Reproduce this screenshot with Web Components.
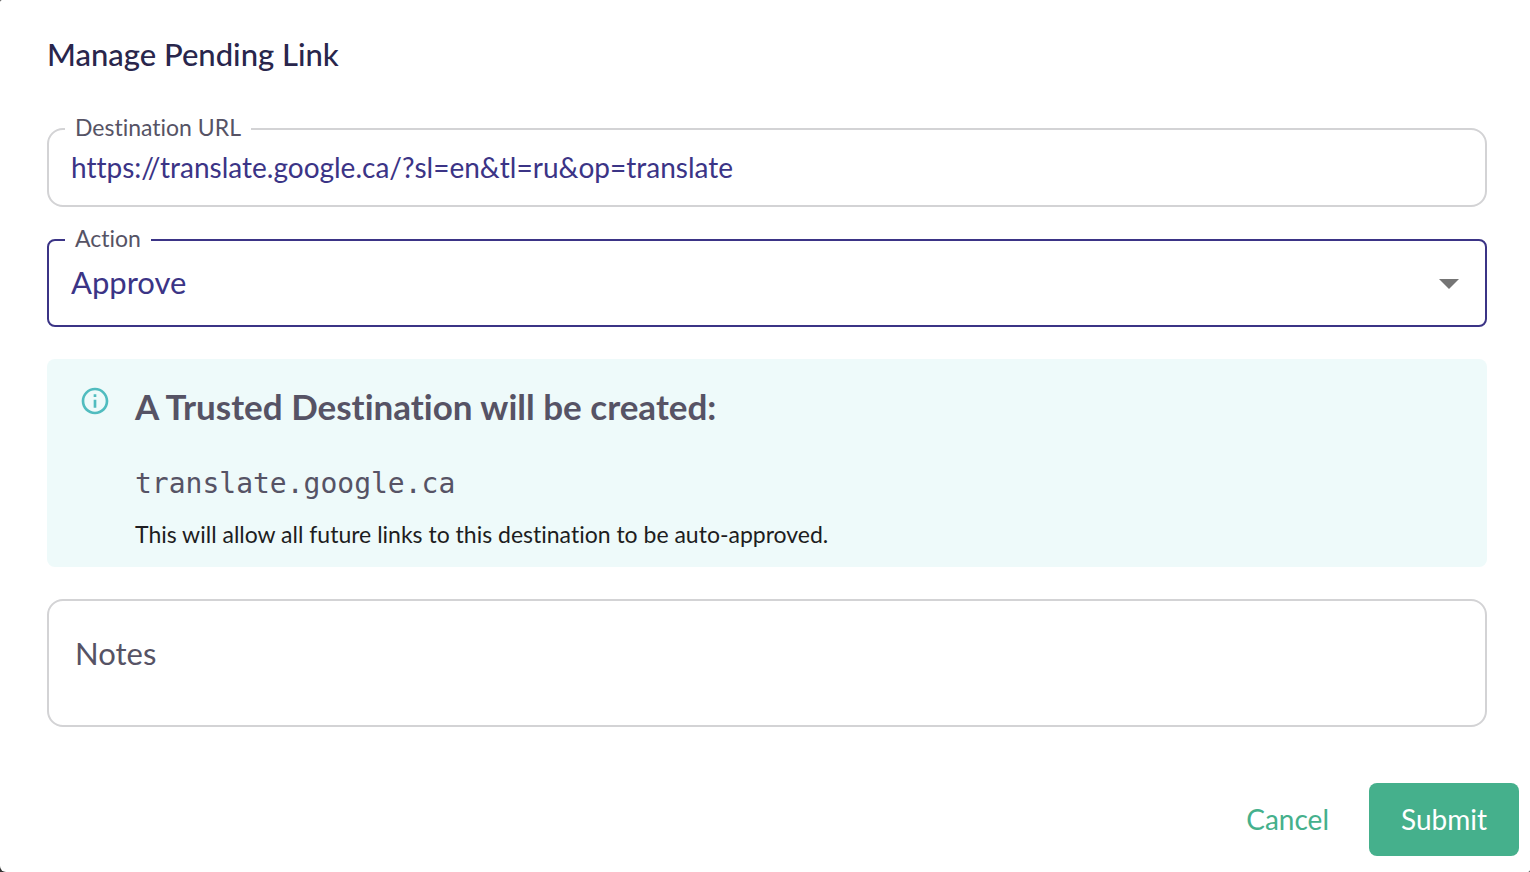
<!DOCTYPE html>
<html lang="en">
<head>
<meta charset="utf-8">
<title>Manage Pending Link</title>
<style>
  html { background: #333; }
  body { margin: 0; font-family: Lato, "Open Sans", sans-serif; font-variant-ligatures: none; color: #565365; }
</style>
</head>
<body>
<link-dialog>
  <span slot="title">Manage Pending Link</span>
  <url-field label="Destination URL" value="https://translate.google.ca/?sl=en&amp;tl=ru&amp;op=translate"></url-field>
  <action-select label="Action"></action-select>
  <info-notice>
    <span slot="title">A Trusted Destination will be created:</span>
    <span slot="domain">translate.google.ca</span>
    This will allow all future links to this destination to be auto-approved.
  </info-notice>
  <notes-field label="Notes"></notes-field>
  <action-button slot="actions" variant="text">Cancel</action-button>
  <action-button slot="actions" variant="filled">Submit</action-button>
</link-dialog>
<script>
const define = (name, html, setup) => {
  customElements.define(name, class extends HTMLElement {
    constructor() {
      super();
      const t = document.createElement('template');
      t.innerHTML = html;
      this.attachShadow({ mode: 'open' }).append(t.content.cloneNode(true));
    }
    connectedCallback() { if (setup) setup(this, this.shadowRoot); }
  });
};

const fieldStyles = `
  :host { display: block; }
  fieldset { box-sizing: border-box; min-width: 0; margin: 0; padding: 0 22px; border: 2px solid #d3d3d5; border-radius: 16px; }
  legend { margin-left: -6px; padding: 0 10px 4px; font-size: 23px; line-height: 20px; color: #565365; }
  label { display: block; }
  input, select { display: block; box-sizing: border-box; width: 100%; margin: 0; padding: 0; border: 0; outline: 0;
    background: transparent; font-family: inherit; font-variant-ligatures: none; color: #3b3486; }`;

define('link-dialog', `
  <style>
    :host { display: flex; flex-direction: column; box-sizing: border-box; min-height: 100vh; padding: 32px 43px 16px 47px;
      background: #fff; border-radius: 2px 0 2px 6px; }
    h1 { margin: 0 0 40px; font-size: 31px; line-height: 45px; font-weight: 500; color: #29264c; }
    .fields { display: flex; flex-direction: column; }
    ::slotted(action-select) { margin-top: 21px; }
    ::slotted(info-notice), ::slotted(notes-field) { margin-top: 32px; }
    footer { display: flex; justify-content: flex-end; gap: 8px; margin: 56px -32px 0 0; }
  </style>
  <h1><slot name="title"></slot></h1>
  <div class="fields"><slot></slot></div>
  <footer><slot name="actions"></slot></footer>`);

define('url-field', `
  <style>${fieldStyles}
    input { height: 52px; margin-bottom: 12px; font-size: 28px; }
  </style>
  <fieldset><legend><label for="url"></label></legend><input id="url" type="text"></fieldset>`,
  (host, root) => {
    root.querySelector('label').textContent = host.getAttribute('label');
    root.querySelector('input').value = host.getAttribute('value');
  });

define('action-select', `
  <style>${fieldStyles}
    fieldset { border-color: #3b3486; border-radius: 8px; }
    .control { display: grid; align-items: center; padding-bottom: 9px; }
    select, svg { grid-area: 1 / 1; }
    select { height: 64px; padding-bottom: 4px; appearance: none; font-size: 31px; }
    svg { justify-self: end; width: 20px; height: 10px; margin-right: 4px; pointer-events: none; }
  </style>
  <fieldset><legend><label for="action"></label></legend>
    <div class="control">
      <select id="action"><option>Approve</option><option>Reject</option></select>
      <svg viewBox="0 0 20 10" aria-hidden="true"><path d="M0 0h20L10 10z" fill="#757575"/></svg>
    </div>
  </fieldset>`,
  (host, root) => { root.querySelector('label').textContent = host.getAttribute('label'); });

define('info-notice', `
  <style>
    :host { display: flex; gap: 24px; padding: 24px 32px 16px; background: #eefafa; border-radius: 8px; }
    svg { flex: none; width: 32px; height: 32px; margin-top: 2px; }
    h2 { margin: 0; font-size: 35px; line-height: 46px; font-weight: 700; color: #565365; }
    code { display: block; margin-top: 35px; font-family: "DejaVu Sans Mono", monospace; font-size: 28px; line-height: 40px; }
    p { margin: 14px 0 0; padding-bottom: 1px; font-size: 23px; line-height: 32px; color: #1d1d21; }
  </style>
  <svg viewBox="0 0 24 24" aria-hidden="true"><path fill="#50bcbf" d="M11 7h2v2h-2zm0 4h2v6h-2zm1-9C6.48 2 2 6.48 2 12s4.48 10 10 10 10-4.480 10-10S17.520 2 12 2zm0 18c-4.410 0-8-3.590-8-8s3.590-8 8-8 8 3.590 8 8-3.590 8-8 8z"/></svg>
  <div>
    <h2><slot name="title"></slot></h2>
    <code><slot name="domain"></slot></code>
    <p><slot></slot></p>
  </div>`);

define('notes-field', `
  <style>
    :host { display: block; }
    label { display: grid; box-sizing: border-box; min-height: 128px; border: 2px solid #d3d3d5; border-radius: 16px; }
    textarea { box-sizing: border-box; width: 100%; padding: 28px 26px; border: 0; outline: 0; resize: none;
      background: transparent; font: 31px/48px Lato, sans-serif; color: #3b3486; }
    textarea::placeholder { color: #565365; opacity: 1; }
  </style>
  <label><textarea rows="1"></textarea></label>`,
  (host, root) => {
    const area = root.querySelector('textarea');
    area.placeholder = host.getAttribute('label');
    area.setAttribute('aria-label', host.getAttribute('label'));
  });

define('action-button', `
  <style>
    :host { display: block; }
    button { display: block; margin: 0; padding: 12px 32px 13px; border: 0; border-radius: 8px; background: transparent;
      font-family: inherit; font-size: 28px; line-height: 48px; color: #45b08c; cursor: pointer; }
    :host([variant="filled"]) button { background: #45b08c; color: #fff; }
  </style>
  <button type="button"><slot></slot></button>`);
</script>
</body>
</html>
